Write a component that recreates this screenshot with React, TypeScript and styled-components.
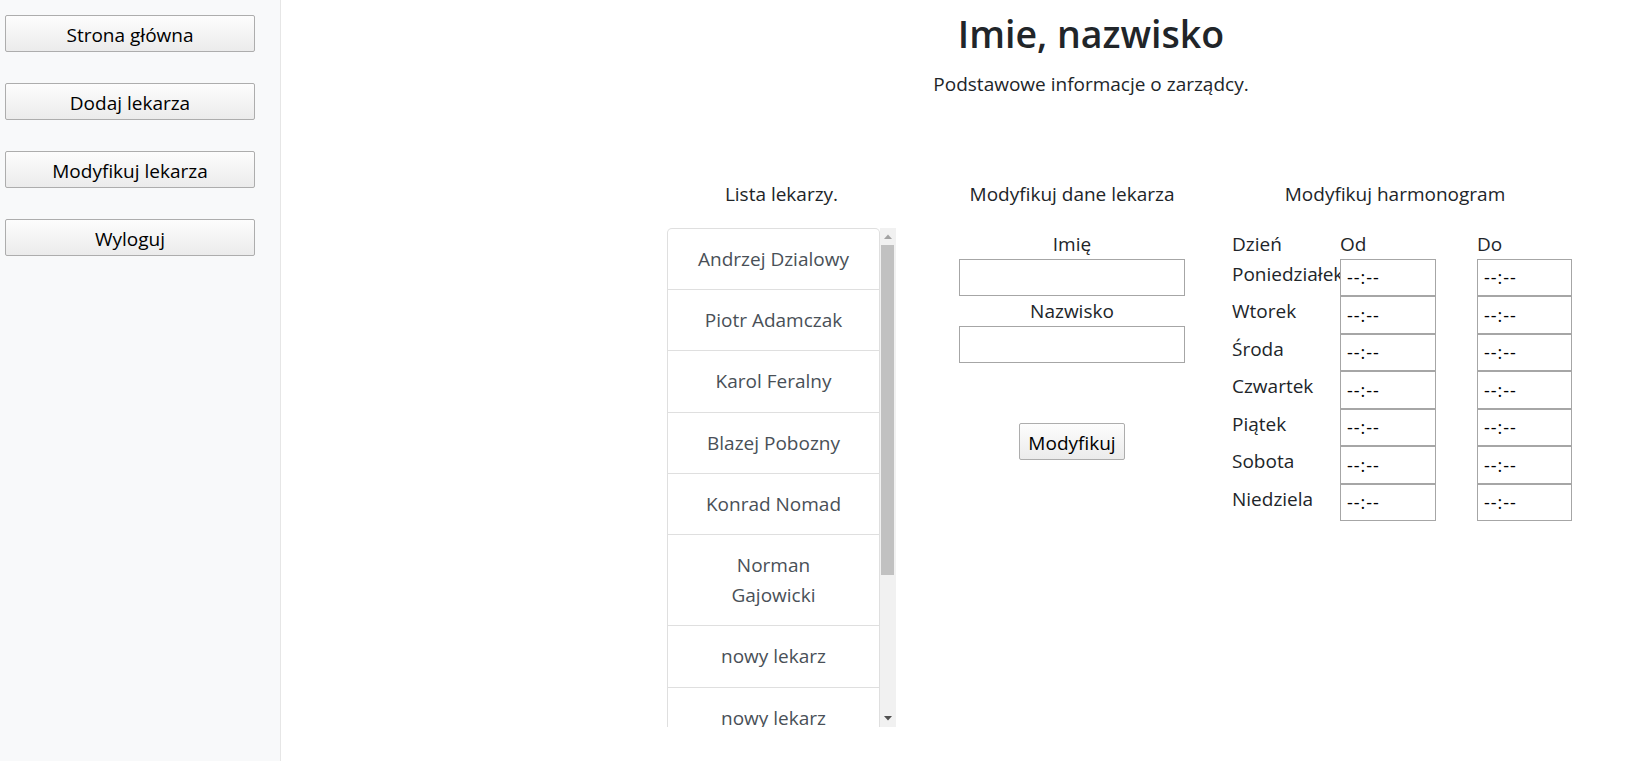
import React from "react";
import styled, { createGlobalStyle } from "styled-components";

const Global = createGlobalStyle`
  html, body { margin: 0; padding: 0; }
  body {
    font-family: "Open Sans", "Noto Sans", sans-serif;
    font-size: 20px;
    line-height: 1.5;
    color: #212529;
    background: #fff;
    overflow: hidden;
  }
  * { box-sizing: border-box; }
`;

const Page = styled.div`
  display: flex;
  width: 1635px;
  height: 761px;
  overflow: hidden;
`;

const Sidebar = styled.nav`
  flex: 0 0 281px;
  height: 100%;
  background: #f8f9fa;
  border-right: 1px solid #e6e6e6;
  padding: 15px 0 0 5px;
  display: flex;
  flex-direction: column;
  gap: 31px;
`;

const NativeButton = styled.button<{ $width?: number }>`
  width: ${(p) => (p.$width ? `${p.$width}px` : "auto")};
  height: 37px;
  padding: 3px 8px 0;
  font-family: inherit;
  font-size: 19px;
  line-height: 1;
  color: #000;
  background: linear-gradient(to bottom, #fdfdfd 0%, #f2f2f2 60%, #ebebeb 100%);
  border: 1px solid #adadad;
  border-radius: 2px;
  cursor: pointer;
`;

const Main = styled.main`
  flex: 1 1 auto;
  min-width: 0;
  display: flex;
  flex-direction: column;
`;

const Header = styled.header`
  padding-left: 266px;
  text-align: center;
`;

const Title = styled.h1`
  margin: 10px 0 0;
  font-size: 37.5px;
  font-weight: 600;
  line-height: 48px;
  color: #212529;
`;

const Lead = styled.p`
  margin: 11px 0 0;
  font-size: 19px;
  line-height: 30px;
`;

const Columns = styled.div`
  display: flex;
  align-items: flex-start;
  margin: 80px 0 0 386px;
`;

const Column = styled.section<{ $width: number; $gap: number }>`
  flex: 0 0 ${(p) => p.$width}px;
  width: ${(p) => p.$width}px;
  margin-right: ${(p) => p.$gap}px;
  display: flex;
  flex-direction: column;
`;

const ColumnTitle = styled.h2`
  margin: 0;
  font-size: 19px;
  font-weight: 400;
  line-height: 30px;
  text-align: center;
  white-space: nowrap;
`;

const ListFrame = styled.div`
  margin-top: 19px;
  height: 499px;
  display: flex;
`;

const DoctorList = styled.div`
  flex: 0 0 213px;
  overflow: hidden;
  display: flex;
  flex-direction: column;
`;

const ScrollTrack = styled.div`
  flex: 0 0 16px;
  background: #f1f1f1;
  display: flex;
  flex-direction: column;
  justify-content: space-between;
`;

const ScrollArrow = styled.div`
  height: 17px;
  display: flex;
  align-items: center;
  justify-content: center;
`;

const ScrollThumb = styled.div`
  height: 330px;
  margin: 0 2px 0 1px;
  background: #c1c1c1;
`;

const ScrollRest = styled.div`
  flex: 1 1 auto;
`;

const DoctorItem = styled.a`
  display: block;
  flex: 0 0 auto;
  padding: 15px 28px;
  margin-bottom: -1px;
  border: 1px solid rgba(0, 0, 0, 0.125);
  color: #495057;
  text-align: center;
  text-decoration: none;
  font-size: 19px;
  line-height: 30.2px;
  background: #fff;
  cursor: pointer;

  &:first-child {
    border-top-left-radius: 5px;
    border-top-right-radius: 5px;
  }
`;

const FieldLabel = styled.label`
  display: block;
  font-size: 19px;
  line-height: 30px;
  text-align: center;
`;

const TextField = styled.input`
  display: block;
  width: 226px;
  height: 37px;
  margin: 0;
  padding: 0 6px;
  font-family: inherit;
  font-size: 19px;
  border: 1px solid #a6a6a6;
  border-radius: 0;
  background: #fff;
  outline: none;
`;

const Form = styled.div`
  margin-top: 20px;
  display: flex;
  flex-direction: column;
`;

const ButtonRow = styled.div`
  margin-top: 60px;
  display: flex;
  justify-content: center;
`;

const Schedule = styled.div`
  margin-top: 20px;
  display: grid;
  grid-template-columns: 108px 137px 95px;
  grid-auto-rows: 37.5px;
  grid-template-rows: 29.5px;
  width: 340px;
`;

const HeadCell = styled.div`
  font-size: 19px;
  line-height: 30px;
`;

const DayCell = styled.div`
  font-size: 19px;
  line-height: 30px;
  white-space: nowrap;
`;

const TimeField = styled.input<{ $width: number }>`
  display: block;
  position: relative;
  width: ${(p) => p.$width}px;
  height: 37.5px;
  margin: 0;
  padding: 0 6px;
  font-family: inherit;
  font-size: 18px;
  letter-spacing: 1px;
  color: #000;
  border: 1px solid #a6a6a6;
  border-radius: 0;
  background: #fff;
  outline: none;

  &::placeholder { color: #000; opacity: 1; }
`;

const navItems = ["Strona główna", "Dodaj lekarza", "Modyfikuj lekarza", "Wyloguj"];

const doctors = [
  "Andrzej Dzialowy",
  "Piotr Adamczak",
  "Karol Feralny",
  "Blazej Pobozny",
  "Konrad Nomad",
  "Norman Gajowicki",
  "nowy lekarz",
  "nowy lekarz",
  "nowy lekarz",
  "nowy lekarz",
  "nowy lekarz",
];

const days = ["Poniedziałek", "Wtorek", "Środa", "Czwartek", "Piątek", "Sobota", "Niedziela"];

export default function App() {
  return (
    <>
      <Global />
      <Page>
        <Sidebar>
          {navItems.map((n) => (
            <NativeButton key={n} $width={250}>
              {n}
            </NativeButton>
          ))}
        </Sidebar>
        <Main>
          <Header>
            <Title>Imie, nazwisko</Title>
            <Lead>Podstawowe informacje o zarządcy.</Lead>
          </Header>
          <Columns>
            <Column $width={229} $gap={63}>
              <ColumnTitle>Lista lekarzy.</ColumnTitle>
              <ListFrame>
                <DoctorList>
                  {doctors.map((d, i) => (
                    <DoctorItem key={i}>{d}</DoctorItem>
                  ))}
                </DoctorList>
                <ScrollTrack aria-hidden>
                  <ScrollArrow>
                    <svg width="8" height="5" viewBox="0 0 8 5">
                      <path d="M0 5 L4 0.5 L8 5 Z" fill="#a3a3a3" />
                    </svg>
                  </ScrollArrow>
                  <ScrollThumb />
                  <ScrollRest />
                  <ScrollArrow>
                    <svg width="8" height="5" viewBox="0 0 8 5">
                      <path d="M0 0 L8 0 L4 4.5 Z" fill="#505050" />
                    </svg>
                  </ScrollArrow>
                </ScrollTrack>
              </ListFrame>
            </Column>
            <Column $width={226} $gap={47}>
              <ColumnTitle>Modyfikuj dane lekarza</ColumnTitle>
              <Form>
                <FieldLabel htmlFor="imie">Imię</FieldLabel>
                <TextField id="imie" type="text" />
                <FieldLabel htmlFor="nazwisko">Nazwisko</FieldLabel>
                <TextField id="nazwisko" type="text" />
                <ButtonRow>
                  <NativeButton>Modyfikuj</NativeButton>
                </ButtonRow>
              </Form>
            </Column>
            <Column $width={326} $gap={0}>
              <ColumnTitle>Modyfikuj harmonogram</ColumnTitle>
              <Schedule>
                <HeadCell>Dzień</HeadCell>
                <HeadCell>Od</HeadCell>
                <HeadCell>Do</HeadCell>
                {days.map((d) => (
                  <React.Fragment key={d}>
                    <DayCell>{d}</DayCell>
                    <div>
                      <TimeField $width={96} type="text" placeholder="--:--" />
                    </div>
                    <div>
                      <TimeField $width={95} type="text" placeholder="--:--" />
                    </div>
                  </React.Fragment>
                ))}
              </Schedule>
            </Column>
          </Columns>
        </Main>
      </Page>
    </>
  );
}
